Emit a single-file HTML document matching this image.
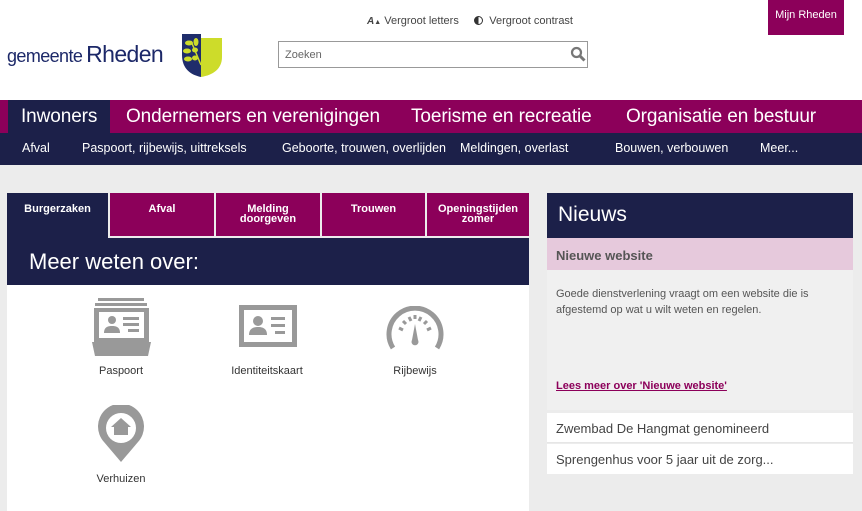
<!DOCTYPE html>
<html><head><meta charset="utf-8"><style>
*{margin:0;padding:0;box-sizing:border-box}
body{width:862px;height:511px;overflow:hidden;background:#ececec;font-family:"Liberation Sans",Arial,sans-serif;position:relative}
.abs{position:absolute}
.nav1{top:100px;left:0;width:862px;height:33px;background:#8c005a}
.nav1 span{position:absolute;top:6px;color:#fff;font-size:19px;white-space:nowrap;letter-spacing:-0.1px}
.nav2{top:133px;left:0;width:862px;height:32px;background:#1c2049}
.nav2 span{position:absolute;top:8px;color:#fff;font-size:12.5px;white-space:nowrap}
.tab{position:absolute;top:193px;height:43px;background:#8c005a;color:#fff;font-size:11px;font-weight:bold;text-align:center;line-height:10px;padding-top:11px}
.lbl{position:absolute;font-size:11px;color:#333;text-align:center;width:120px}
</style></head><body>
<div class="abs" style="top:0;left:0;width:862px;height:100px;background:#fff"></div>
<div class="abs" style="left:7px;top:41px;color:#1c2868;letter-spacing:-0.6px;white-space:nowrap"><span style="font-size:18px">gemeente</span> <span style="font-size:23px">Rheden</span></div>
<svg class="abs" style="left:181px;top:33px" width="42" height="45" viewBox="0 0 42 45">
<path d="M1 1H20V44C10 42 1 36 1 22Z" fill="#1f2d6b"/>
<path d="M20 5H41V24C41 36 32 42 20 44Z" fill="#cddc2a"/>
<g fill="#cddc2a"><ellipse cx="8" cy="10" rx="4" ry="2.5"/><ellipse cx="15" cy="9" rx="2.5" ry="4"/><ellipse cx="6" cy="18" rx="4" ry="2.5"/><ellipse cx="14" cy="17" rx="3" ry="2.5"/><ellipse cx="7" cy="26" rx="4" ry="2.5"/><ellipse cx="14" cy="25" rx="3" ry="2.5"/></g>
<path d="M10 8l10 24" stroke="#cddc2a" stroke-width="1.5"/>
</svg>
<div class="abs" style="left:367px;top:15px;font-size:11px;color:#444;white-space:nowrap"><i style="font-size:10px;font-weight:bold">A</i><span style="font-size:7px">▲</span> Vergroot letters &nbsp;&nbsp;&nbsp; <span style="display:inline-block;width:9px;height:9px;border-radius:50%;border:1.5px solid #333;background:linear-gradient(90deg,#333 50%,#fff 50%);vertical-align:-1px"></span>&nbsp; Vergroot contrast</div>
<div class="abs" style="left:768px;top:0;width:76px;height:35px;background:#8c005a;color:#fff;font-size:11px;text-align:center;line-height:31px">Mijn Rheden</div>
<div class="abs" style="left:278px;top:41px;width:310px;height:27px;border:1px solid #999;background:#fff;font-size:11px;color:#666;padding:7px 6px">Zoeken</div>
<svg class="abs" style="left:570px;top:46px" width="16" height="16" viewBox="0 0 16 16"><circle cx="6.5" cy="6.5" r="4.5" stroke="#777" stroke-width="2.2" fill="none"/><path d="M10 10l4.5 4.5" stroke="#777" stroke-width="3"/></svg>
<div class="abs nav1"><div class="abs" style="left:8px;top:0;width:102px;height:33px;background:#1c2049"></div>
<span style="left:21px">Inwoners</span><span style="left:126px">Ondernemers en verenigingen</span><span style="left:411px">Toerisme en recreatie</span><span style="left:626px">Organisatie en bestuur</span></div>
<div class="abs nav2"><span style="left:22px">Afval</span><span style="left:82px">Paspoort, rijbewijs, uittreksels</span><span style="left:282px">Geboorte, trouwen, overlijden</span><span style="left:460px">Meldingen, overlast</span><span style="left:615px">Bouwen, verbouwen</span><span style="left:760px">Meer...</span></div>
<div class="tab" style="left:7px;width:101px;height:45px;background:#1c2049">Burgerzaken</div>
<div class="tab" style="left:110px;width:104px">Afval</div>
<div class="tab" style="left:216px;width:104px">Melding<br>doorgeven</div>
<div class="tab" style="left:322px;width:103px">Trouwen</div>
<div class="tab" style="left:427px;width:102px">Openingstijden<br>zomer</div>
<div class="abs" style="left:7px;top:238px;width:522px;height:47px;background:#1c2049;color:#fff;font-size:22px;padding:11px 22px">Meer weten over:</div>
<div class="abs" style="left:28px;top:284px;width:0;height:0;border:6px solid transparent;border-top-color:#1c2049"></div>
<div class="abs" style="left:7px;top:285px;width:522px;height:226px;background:#fff"></div>
<svg class="abs" style="left:92px;top:298px" width="60" height="58" viewBox="0 0 60 58"><rect x="6" y="0" width="46" height="3" fill="#999"/><rect x="3" y="5" width="52" height="3" fill="#999"/><path d="M2 10h55v34H2z" fill="#999"/><rect x="7" y="14" width="45" height="26" fill="#fff"/><circle cx="20" cy="22" r="4" fill="#999"/><path d="M12 35c0-6 4-7 8-7s8 1 8 7z" fill="#999"/><rect x="31" y="19" width="16" height="3" fill="#999"/><rect x="31" y="25" width="16" height="3" fill="#999"/><rect x="36" y="31" width="11" height="3" fill="#999"/><path d="M0 44h59l-3 14H3z" fill="#999"/></svg>
<div class="lbl" style="left:61px;top:365px">Paspoort</div>
<svg class="abs" style="left:238px;top:304px" width="60" height="44" viewBox="0 0 60 44"><rect x="1" y="1" width="58" height="42" fill="#999"/><rect x="6" y="6" width="48" height="32" fill="#fff"/><circle cx="20" cy="17" r="5" fill="#999"/><path d="M11 31c0-7 5-8 9-8s9 1 9 8z" fill="#999"/><rect x="33" y="13" width="14" height="3" fill="#999"/><rect x="33" y="20" width="14" height="3" fill="#999"/><rect x="37" y="27" width="10" height="3" fill="#999"/></svg>
<div class="lbl" style="left:207px;top:365px">Identiteitskaart</div>
<svg class="abs" style="left:385px;top:306px" width="60" height="44" viewBox="0 0 60 44"><path d="M8 42A26 26 0 1 1 52 42" stroke="#999" stroke-width="5" fill="none"/><g stroke="#999" stroke-width="3"><path d="M14 22l4 2M18 15l3 3M24 11l2 4M30 9v4M36 11l-2 4M42 15l-3 3M46 22l-4 2"/></g><path d="M30 18l3 16a3.5 3.5 0 1 1-6 0z" fill="#999"/></svg>
<div class="lbl" style="left:355px;top:365px">Rijbewijs</div>
<svg class="abs" style="left:97px;top:405px" width="48" height="58" viewBox="0 0 48 58"><path d="M24 57L7 37A23 23 0 1 1 41 37z" fill="#999"/><circle cx="24" cy="23" r="15" fill="#fff"/><path d="M24 13l-10 9h3v8h14v-8h3z" fill="#999"/></svg>
<div class="lbl" style="left:61px;top:473px">Verhuizen</div>
<div class="abs" style="left:547px;top:193px;width:306px;height:45px;background:#1c2049;color:#fff;font-size:21px;padding:10px 11px">Nieuws</div>
<div class="abs" style="left:566px;top:238px;width:0;height:0;border:5px solid transparent;border-top-color:#1c2049"></div>
<div class="abs" style="left:547px;top:238px;width:306px;height:32px;background:#e6c9dc;color:#555;font-size:13px;font-weight:bold;padding:10px 9px">Nieuwe website</div>
<div class="abs" style="left:547px;top:270px;width:306px;height:140px;background:#f0f0f0"></div>
<div class="abs" style="left:556px;top:286px;width:290px;font-size:11px;color:#555;line-height:16px">Goede dienstverlening vraagt om een website die is afgestemd op wat u wilt weten en regelen.</div>
<div class="abs" style="left:556px;top:380px;font-size:11px;font-weight:bold;color:#8c005a;text-decoration:underline">Lees meer over 'Nieuwe website'</div>
<div class="abs" style="left:547px;top:413px;width:306px;height:30px;background:#fff;border-bottom:1px solid #e6e6e6;font-size:13px;color:#444;padding:8px 9px">Zwembad De Hangmat genomineerd</div>
<div class="abs" style="left:547px;top:444px;width:306px;height:30px;background:#fff;font-size:13px;color:#444;padding:8px 9px">Sprengenhus voor 5 jaar uit de zorg...</div>
</body></html>
